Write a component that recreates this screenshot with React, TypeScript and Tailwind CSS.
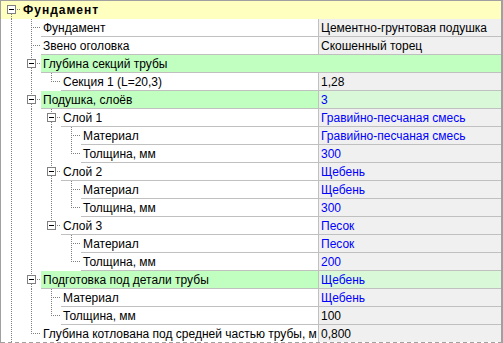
import React from 'react';

type Node = {
  label: string;
  value?: string;
  blue?: boolean;
  kind?: 'header' | 'group';
  children?: Node[];
};

type Row = Node & { level: number; trail: boolean[]; last: boolean };

const tree: Node = {
  label: 'Фундамент',
  kind: 'header',
  children: [
    { label: 'Фундамент', value: 'Цементно-грунтовая подушка' },
    { label: 'Звено оголовка', value: 'Скошенный торец' },
    {
      label: 'Глубина секций трубы',
      kind: 'group',
      children: [{ label: 'Секция 1 (L=20,3)', value: '1,28' }],
    },
    {
      label: 'Подушка, слоёв',
      kind: 'group',
      value: '3',
      blue: true,
      children: [
        {
          label: 'Слой 1',
          value: 'Гравийно-песчаная смесь',
          blue: true,
          children: [
            { label: 'Материал', value: 'Гравийно-песчаная смесь', blue: true },
            { label: 'Толщина, мм', value: '300', blue: true },
          ],
        },
        {
          label: 'Слой 2',
          value: 'Щебень',
          blue: true,
          children: [
            { label: 'Материал', value: 'Щебень', blue: true },
            { label: 'Толщина, мм', value: '300', blue: true },
          ],
        },
        {
          label: 'Слой 3',
          value: 'Песок',
          blue: true,
          children: [
            { label: 'Материал', value: 'Песок', blue: true },
            { label: 'Толщина, мм', value: '200', blue: true },
          ],
        },
      ],
    },
    {
      label: 'Подготовка под детали трубы',
      kind: 'group',
      value: 'Щебень',
      blue: true,
      children: [
        { label: 'Материал', value: 'Щебень', blue: true },
        { label: 'Толщина, мм', value: '100' },
      ],
    },
    { label: 'Глубина котлована под средней частью трубы, м', value: '0,800' },
  ],
};

const flatten = (node: Node, level: number, trail: boolean[], last: boolean, out: Row[]) => {
  out.push({ ...node, level, trail, last });
  const kids = node.children ?? [];
  kids.forEach((c, i) => flatten(c, level + 1, [...trail, !last], i === kids.length - 1, out));
  return out;
};

// root has more siblings below the cut, so it is not last
const rows = flatten(tree, 0, [], false, []);

const dot = { stroke: '#808080', strokeWidth: 1, strokeDasharray: '1 1' };

const Gutter = ({ row }: { row: Row }) => {
  const w = 20 + 20 * row.level;
  const x0 = 10.5 + 20 * row.level;
  const hasBox = !!row.children?.length;
  return (
    <svg width={w} height={18} className="shrink-0" shapeRendering="crispEdges">
      {row.trail.map((on, k) =>
        on && k < row.level ? <line key={k} x1={10.5 + 20 * k} y1={0} x2={10.5 + 20 * k} y2={18} {...dot} /> : null
      )}
      {hasBox ? (
        <>
          {row.level > 0 && <line x1={x0} y1={0} x2={x0} y2={4} {...dot} />}
          {!row.last && <line x1={x0} y1={13} x2={x0} y2={18} {...dot} />}
          <line x1={x0 + 5} y1={8.5} x2={w} y2={8.5} {...dot} />
          <rect x={x0 - 4} y={4.5} width={8} height={8} fill="#ffffff" stroke="#808080" />
          <line x1={x0 - 2.5} y1={8.5} x2={x0 + 2.5} y2={8.5} stroke="#000000" />
        </>
      ) : (
        <>
          <line x1={x0} y1={0} x2={x0} y2={row.last ? 9 : 18} {...dot} />
          <line x1={x0 + 1} y1={8.5} x2={w} y2={8.5} {...dot} />
        </>
      )}
    </svg>
  );
};

const GridRow = ({ row, isLast }: { row: Row; isLast: boolean }) => {
  const h = isLast ? 'h-[17px]' : 'h-[18px]';
  const sep = isLast ? '' : 'border-b border-[#c0c0c0]';

  if (row.kind === 'header') {
    return (
      <div className={`flex ${h} shrink-0 bg-[#ffffc0]`}>
        <Gutter row={row} />
        <div className="flex items-center pl-[2px] font-bold tracking-[1px]">{row.label}</div>
      </div>
    );
  }

  const group = row.kind === 'group';
  const labelBg = group ? 'bg-[#c0ffc0]' : 'bg-white';
  const valueCls =
    row.value === undefined
      ? 'bg-[#c0ffc0]'
      : `${group ? 'bg-[#d8f8d8]' : 'bg-[#f0f0f0]'} border-l border-l-[#c0c0c0]`;

  return (
    <div className={`flex ${h} shrink-0`}>
      <div className="flex w-[317px] shrink-0">
        <Gutter row={row} />
        <div className={`flex flex-1 items-center whitespace-nowrap pl-[2px] ${labelBg} ${sep}`}>{row.label}</div>
      </div>
      <div
        className={`flex flex-1 items-center whitespace-nowrap pl-[2px] ${valueCls} ${sep} ${
          row.blue ? 'text-[#0000ff]' : 'text-black'
        }`}
      >
        {row.value}
      </div>
    </div>
  );
};

export default function App() {
  return (
    <div
      className="flex h-[343px] w-[503px] flex-col overflow-hidden border-t border-l border-r-2 border-[#a0a0a0] bg-white text-[12px] text-black"
      style={{ fontFamily: '"Liberation Sans", Arial, sans-serif' }}
    >
      {rows.map((r, i) => (
        <GridRow key={i} row={r} isLast={i === rows.length - 1} />
      ))}
      <div className="h-px shrink-0 bg-[repeating-linear-gradient(90deg,#a0a0a0_0_4px,transparent_4px_7px)]" />
    </div>
  );
}
